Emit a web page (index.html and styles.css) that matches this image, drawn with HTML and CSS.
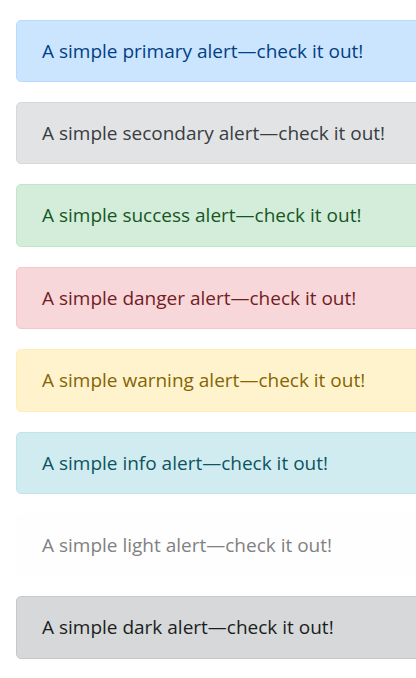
FILE: index.html
```html
<!DOCTYPE html>
<html>
<head>
<meta charset="utf-8">
<link rel="stylesheet" href="styles.css">
</head>
<body>
<div class="stack">
  <div class="alert primary">A simple primary alert—check it out!</div>
  <div class="alert secondary">A simple secondary alert—check it out!</div>
  <div class="alert success">A simple success alert—check it out!</div>
  <div class="alert danger">A simple danger alert—check it out!</div>
  <div class="alert warning">A simple warning alert—check it out!</div>
  <div class="alert info">A simple info alert—check it out!</div>
  <div class="alert light">A simple light alert—check it out!</div>
  <div class="alert dark">A simple dark alert—check it out!</div>
</div>
</body>
</html>
```
FILE: styles.css
```css
html, body {
  margin: 0;
  padding: 0;
  overflow: hidden;
  background: #fff;
}
.stack {
  padding: 19.5px 0 0 16px;
  width: 420px;
}
.alert {
  font-family: "Open Sans", "Noto Sans", sans-serif;
  font-size: 19px;
  line-height: 30.4px;
  padding: 15px 25px;
  margin-bottom: 20px;
  border: 1px solid transparent;
  border-radius: 5px;
}
.primary { color: #004085; background: #cce5ff; border-color: #b8daff; }
.secondary { color: #383d41; background: #e2e3e5; border-color: #d6d8db; }
.success { color: #155724; background: #d4edda; border-color: #c3e6cb; }
.danger { color: #721c24; background: #f8d7da; border-color: #f5c6cb; }
.warning { color: #856404; background: #fff3cd; border-color: #ffeeba; }
.info { color: #0c5460; background: #d1ecf1; border-color: #bee5eb; }
.light { color: #818182; background: #fefefe; border-color: #fdfdfe; }
.dark { color: #1b1e21; background: #d6d8d9; border-color: #c6c8ca; }
```
